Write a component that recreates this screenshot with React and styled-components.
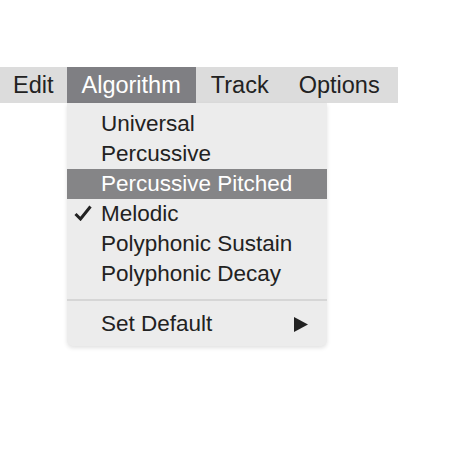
import React from 'react';
import styled, { createGlobalStyle } from 'styled-components';

const GlobalStyle = createGlobalStyle`
	html, body {
		margin: 0;
		padding: 0;
		background: #fff;
	}
	body {
		font-family: 'Liberation Sans', Arial, sans-serif;
		-webkit-font-smoothing: antialiased;
	}
`;

const Page = styled.div`
	width: 454px;
	height: 454px;
	padding-top: 67px;
	box-sizing: border-box;
`;

const MenuBar = styled.div`
	width: 398px;
	height: 36px;
	display: flex;
	align-items: stretch;
	background: #dcdcdc;
	position: relative;
`;

const BarItem = styled.div`
	display: flex;
	align-items: center;
	padding: ${(p) => p.$pad || '0 15px'};
	font-size: 23.5px;
	color: ${(p) => (p.$active ? '#fff' : '#222')};
	background: ${(p) => (p.$active ? '#7f7f83' : 'transparent')};
`;

const Dropdown = styled.div`
	position: absolute;
	top: 36px;
	left: 67px;
	width: 260px;
	padding: 6px 0 7px;
	background: #ececec;
	border-radius: 0 0 6px 6px;
	box-shadow: 0 2px 4px rgba(0, 0, 0, 0.12);
	z-index: 10;
`;

const Item = styled.div`
	height: 30px;
	display: flex;
	align-items: center;
	padding: 0 19px 0 34px;
	font-size: 22.5px;
	color: ${(p) => (p.$active ? '#fff' : '#222')};
	background: ${(p) => (p.$active ? '#858587' : 'transparent')};
	position: relative;
`;

const Check = styled.svg`
	position: absolute;
	left: 7px;
	top: 6px;
	width: 18px;
	height: 16px;
`;

const Label = styled.span`
	flex: 1;
`;

const Arrow = styled.svg`
	width: 15px;
	height: 15px;
`;

const Separator = styled.div`
	height: 2px;
	margin: 10px 0 8px;
	background: #d6d6d6;
`;

const items = [
	{ label: 'Universal' },
	{ label: 'Percussive' },
	{ label: 'Percussive Pitched', active: true },
	{ label: 'Melodic', checked: true },
	{ label: 'Polyphonic Sustain' },
	{ label: 'Polyphonic Decay' },
];

export default function App() {
	return (
		<>
			<GlobalStyle />
			<Page>
				<MenuBar>
					<BarItem $pad="0 13px">Edit</BarItem>
					<BarItem $active>Algorithm</BarItem>
					<BarItem>Track</BarItem>
					<BarItem>Options</BarItem>
					<Dropdown>
						{items.map((it) => (
							<Item key={it.label} $active={it.active}>
								{it.checked && (
									<Check viewBox="0 0 18 16">
										<path d="M1.5 9 L6.5 14 L16.5 1.5" fill="none" stroke="#222" strokeWidth="3" />
									</Check>
								)}
								<Label>{it.label}</Label>
							</Item>
						))}
						<Separator />
						<Item>
							<Label>Set Default</Label>
							<Arrow viewBox="0 0 15 15">
								<path d="M1 0 L15 7.5 L1 15 Z" fill="#222" />
							</Arrow>
						</Item>
					</Dropdown>
				</MenuBar>
			</Page>
		</>
	);
}
